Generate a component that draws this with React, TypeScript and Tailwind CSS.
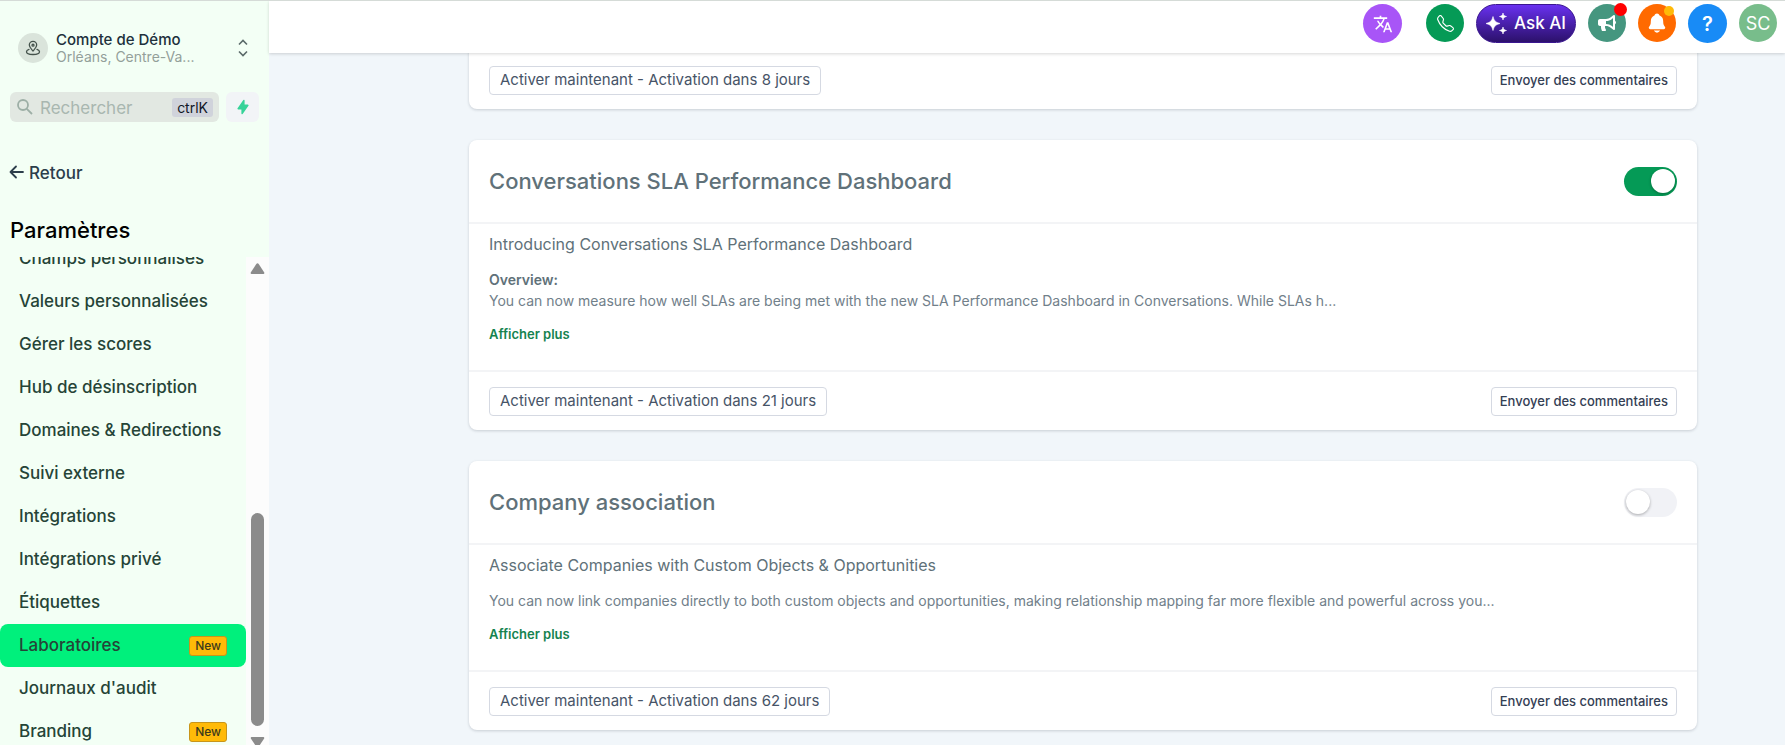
import React, { useState } from 'react';
import { BsTelephone } from 'react-icons/bs';
import { FaBullhorn } from 'react-icons/fa';
import { IoNotifications } from 'react-icons/io5';
import { MdTranslate } from 'react-icons/md';

interface NavItem {
  label: string;
  isNew?: boolean;
  active?: boolean;
}

interface Lab {
  id: string;
  title: string;
  subtitle: string;
  heading?: string;
  text: string;
  days: number;
  enabled: boolean;
}

const navItems: NavItem[] = [
  { label: 'Champs personnalisés' },
  { label: 'Valeurs personnalisées' },
  { label: 'Gérer les scores' },
  { label: 'Hub de désinscription' },
  { label: 'Domaines & Redirections' },
  { label: 'Suivi externe' },
  { label: 'Intégrations' },
  { label: 'Intégrations privé' },
  { label: 'Étiquettes' },
  { label: 'Laboratoires', isNew: true, active: true },
  { label: "Journaux d'audit" },
  { label: 'Branding', isNew: true },
];

const labs: Lab[] = [
  {
    id: 'sla',
    title: 'Conversations SLA Performance Dashboard',
    subtitle: 'Introducing Conversations SLA Performance Dashboard',
    heading: 'Overview:',
    text: 'You can now measure how well SLAs are being met with the new SLA Performance Dashboard in Conversations. While SLAs h...',
    days: 21,
    enabled: true,
  },
  {
    id: 'company',
    title: 'Company association',
    subtitle: 'Associate Companies with Custom Objects & Opportunities',
    text: 'You can now link companies directly to both custom objects and opportunities, making relationship mapping far more flexible and powerful across you...',
    days: 62,
    enabled: false,
  },
];

const Sidebar: React.FC = () => {
  return (
    <aside className="flex w-[269px] shrink-0 flex-col bg-[#f3fff5]">
      {/* Account switcher */}
      <button type="button" className="mt-[30px] flex items-center gap-2 pl-[18px] pr-5 text-left">
        <span className="flex size-[30px] shrink-0 items-center justify-center rounded-full bg-[#dae4db] text-[#44524b]">
          <svg className="size-4" viewBox="0 0 16 16" fill="none" stroke="currentColor" strokeWidth="1.3" strokeLinecap="round" strokeLinejoin="round">
            <path d="M8 11C6.2 9 4.3 7.4 4.3 5.1a3.7 3.7 0 0 1 7.4 0C11.7 7.4 9.8 9 8 11Z" />
            <circle cx="8" cy="5.2" r="1" />
            <path d="M4 9.3c-1.5.5-2.500 1.300-2.500 2.500 0 1.600 2.900 2.700 6.500 2.700s6.500-1.100 6.500-2.700c0-1.200-1-2-2.500-2.500" />
          </svg>
        </span>
        <span className="flex min-w-0 flex-1 flex-col">
          <span className="text-[15px] leading-[17px] font-medium text-[#20303c]">Compte de Démo</span>
          <span className="text-[14px] leading-[17px] text-[#93a09a]">Orléans, Centre-Va...</span>
        </span>
        <svg className="h-5 w-3 text-[#5a6a69]" viewBox="0 0 12 20" fill="none" stroke="currentColor" strokeWidth="1.6">
          <path d="M2 6.500 6 2.500l4 4M2 13.500l4 4 4-4" />
        </svg>
      </button>

      {/* Quick search */}
      <div className="mt-[27px] flex items-center gap-[7px] pl-[10px] pr-[10px]">
        <label className="flex h-[30px] min-w-0 flex-1 items-center rounded-md bg-[#e2e8e2] pl-[6px] pr-[6px]">
          <svg className="size-[18px] shrink-0 text-[#9dafa6]" viewBox="0 0 18 18" fill="none" stroke="currentColor" strokeWidth="1.8">
            <circle cx="7" cy="7" r="5" />
            <path d="m10.800 10.800 5.200 5.200" />
          </svg>
          <input
            type="text"
            aria-label="Rechercher"
            placeholder="Rechercher"
            className="h-[30px] min-w-0 flex-1 bg-transparent px-[6px] pt-[2px] text-[17px] outline-none placeholder:text-[#a9b7b0]"
          />
          <kbd className="rounded-[3px] bg-[#d0d3db] px-[5px] font-[inherit] text-[14px] leading-[19px] text-[#111827]">ctrlK</kbd>
        </label>
        <button type="button" aria-label="Actions rapides" className="flex h-[30px] w-[33px] items-center justify-center rounded-md bg-[#f2f4f7] text-[#37d399]">
          <svg className="size-[16px]" viewBox="0 0 20 20" fill="currentColor">
            <path d="M11.300 1.046A1 1 0 0 1 12 2v5h4a1 1 0 0 1 .82 1.573l-7 10A1 1 0 0 1 8 18v-5H4a1 1 0 0 1-.82-1.573l7-10a1 1 0 0 1 1.120-.380Z" />
          </svg>
        </button>
      </div>

      <a href="#retour" className="mt-[39px] flex items-center gap-[5px] pl-[9px] text-[17px] leading-[24px] font-medium text-[#2c3e4b]">
        <svg className="h-4 w-[15px]" viewBox="0 0 15 16" fill="none" stroke="currentColor" strokeWidth="1.8" strokeLinecap="round" strokeLinejoin="round">
          <path d="M14 7H1.500M7 1.500 1.500 7 7 12.500" />
        </svg>
        Retour
      </a>

      <h1 className="mt-[29px] pl-[10px] text-[22px] leading-[32px] font-medium text-black">Paramètres</h1>

      <div className="mt-[11px] flex min-h-0 flex-1">
        {/* List is scrolled near its end, so the first and last rows run past the edges */}
        <nav className="flex min-w-0 flex-1 flex-col justify-end overflow-hidden">
          <div className="-mb-2 flex flex-col">
            {navItems.map((item) => (
              <a
                key={item.label}
                href="#labs"
                className={`flex h-[43px] shrink-0 items-center justify-between rounded-lg pl-[19px] pr-[19px] text-[17px] font-medium whitespace-nowrap text-[#254437] ${item.active ? 'bg-[#00f07c]' : ''}`}
              >
                {item.label}
                {item.isNew && (
                  <span className="rounded-[3px] border border-[#c8951a] bg-[#ffba08] px-[5px] text-[12px] leading-[18px] font-medium text-[#3b3a1c]">New</span>
                )}
              </a>
            ))}
          </div>
        </nav>
        <div className="flex w-[23px] shrink-0 flex-col items-center bg-[#fcfcfc] text-[#8b8b8b]">
          <svg className="mt-[6px] h-[12px] w-[15px]" viewBox="0 0 15 12" fill="currentColor">
            <path d="M6.300 1.100a1.500 1.500 0 0 1 2.400 0l5.400 8.100c.6 1 .1 1.800-1 1.800H1.900c-1.100 0-1.600-.8-1-1.800Z" />
          </svg>
          <div className="flex-1"></div>
          <div className="h-[213px] w-[13px] rounded-full bg-[#8b8b8b]"></div>
          <svg className="mt-[10px] h-[9px] w-[15px]" viewBox="0 0 15 9" fill="currentColor">
            <path d="M2 1h11c1.100 0 1.600.8 1 1.800L9.800 9H5.200L1 2.800C.4 1.800.9 1 2 1Z" />
          </svg>
        </div>
      </div>
    </aside>
  );
};

const Header: React.FC = () => {
  return (
    <header className="z-10 flex h-[52px] shrink-0 items-start justify-end bg-white pt-[3px] pr-2 text-white shadow-[0_1px_3px_rgba(0,0,0,0.16)]">
      <button type="button" aria-label="Langue" className="mr-6 flex size-[39px] items-center justify-center rounded-full bg-[#a855f7]">
        <MdTranslate className="size-5" />
      </button>
      <button type="button" aria-label="Appeler" className="mr-3 flex size-[38px] items-center justify-center rounded-full bg-[#059a56]">
        <BsTelephone className="size-[17px]" />
      </button>
      <button type="button" className="mr-3 flex h-[39px] w-[100px] items-center justify-center gap-[7px] rounded-full border border-[#3a1690] bg-linear-to-b from-[#6931f0] to-[#2c116c] text-[17px] font-medium">
        <svg className="size-[21px]" viewBox="0 0 21 21" fill="currentColor">
          <path d="M7 3.500c1 4.300 2.700 6 7 7-4.300 1-6 2.700-7 7-1-4.300-2.700-6-7-7 4.300-1 6-2.700 7-7ZM17 0c.5 2.300 1.200 3 3.500 3.500C18.200 4 17.500 4.700 17 7c-.5-2.300-1.200-3-3.500-3.500C15.800 3 16.500 2.300 17 0ZM17 14c.5 2.300 1.200 3 3.500 3.500-2.300.5-3 1.200-3.500 3.500-.5-2.300-1.200-3-3.500-3.500 2.300-.5 3-1.200 3.500-3.500Z" stroke="currentColor" strokeWidth="0.6" />
        </svg>
        Ask AI
      </button>
      <button type="button" aria-label="Annonces" className="relative mr-3 flex size-[38px] items-center justify-center rounded-full bg-[#45967f]">
        <FaBullhorn className="size-[18px]" />
        <span className="absolute -top-px -right-px size-[13px] rounded-full bg-[#ff0000]"></span>
      </button>
      <button type="button" aria-label="Notifications" className="relative mr-3 flex size-[38px] items-center justify-center rounded-full bg-[#ff6a00]">
        <IoNotifications className="size-[22px]" />
        <span className="absolute top-[2px] right-[2px] size-[10px] rounded-full bg-[#ffba08]"></span>
      </button>
      <button type="button" aria-label="Aide" className="mr-3 flex size-[39px] items-center justify-center rounded-full bg-[#188bf6] text-[20px] font-semibold">
        ?
      </button>
      <button type="button" aria-label="Profil" className="flex size-[38px] items-center justify-center rounded-full bg-[#78bd8b] text-[18px]">
        SC
      </button>
    </header>
  );
};

const CardFooter: React.FC<{ days: number }> = ({ days }) => {
  return (
    <div className="flex items-center justify-between px-5 pt-[15px] pb-[14px]">
      <button type="button" className="h-[29px] rounded-[4px] border border-[#d5d9e2] px-[10px] text-[15px] text-[#475467]">
        Activer maintenant - Activation dans {days} jours
      </button>
      <button type="button" className="h-[29px] rounded-[4px] border border-[#d5d9e2] px-2 text-[13px] font-medium text-[#344054]">
        Envoyer des commentaires
      </button>
    </div>
  );
};

const LabCard: React.FC<{ lab: Lab }> = ({ lab }) => {
  const [enabled, setEnabled] = useState(lab.enabled);

  return (
    <section className="shrink-0 rounded-lg bg-white text-[#607179] shadow-[0_1px_3px_rgba(16,24,40,0.18)]">
      <div className="flex h-[82px] items-center justify-between px-5">
        <h2 className="text-[22px] leading-[30px] font-medium">{lab.title}</h2>
        <button
          type="button"
          role="switch"
          aria-checked={enabled}
          aria-label={lab.title}
          onClick={() => setEnabled(!enabled)}
          className={`flex h-[29px] w-[53px] items-center rounded-full px-[2px] ${enabled ? 'justify-end bg-[#059a56]' : 'justify-start bg-[#f1f2f6]'}`}
        >
          <span className="size-[24px] rounded-full bg-white shadow-[0_1px_3px_rgba(0,0,0,0.3)]"></span>
        </button>
      </div>
      <div className="border-y-2 border-[#f3f4f6] px-5 pt-[9px] pb-[25px]">
        <p className="text-[16px] leading-[22px]">{lab.subtitle}</p>
        <div className="mt-[14px] text-[14px] leading-[21px]">
          {lab.heading && <p className="font-semibold">{lab.heading}</p>}
          <p className="text-[#71808a]">{lab.text}</p>
        </div>
        <button type="button" className="mt-3 block text-[13px] leading-[22px] font-semibold text-[#15834f]">
          Afficher plus
        </button>
      </div>
      <CardFooter days={lab.days} />
    </section>
  );
};

const App: React.FC = () => {
  return (
    <div className="flex h-screen overflow-hidden border-t border-[#d5dbd7] bg-[#f1f6fa] font-['Inter','Liberation_Sans',sans-serif]">
      <Sidebar />
      <div className="flex min-w-0 flex-1 flex-col">
        <Header />
        <main className="flex min-h-0 flex-1 flex-col gap-[31px] overflow-hidden pr-[88px] pl-[200px]">
          <section className="-mt-[2px] shrink-0 rounded-b-lg bg-white shadow-[0_1px_3px_rgba(16,24,40,0.18)]">
            <CardFooter days={8} />
          </section>
          {labs.map((lab) => (
            <LabCard key={lab.id} lab={lab} />
          ))}
        </main>
      </div>
    </div>
  );
};

export default App;
